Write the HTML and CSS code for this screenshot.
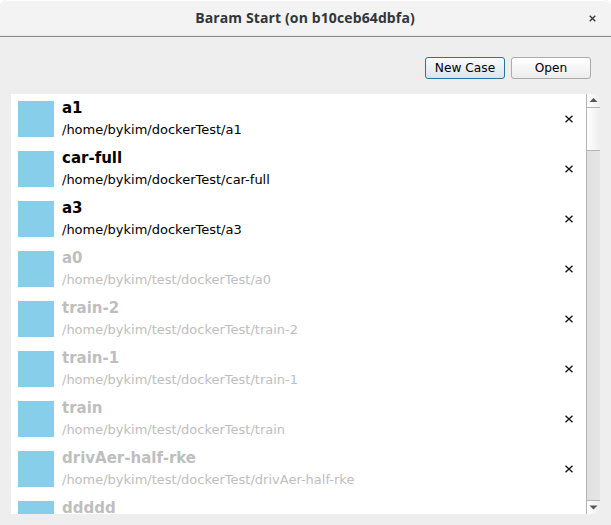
FILE: index.html
```html
<!DOCTYPE html>
<html lang="en"><head><meta charset="utf-8"><title>Baram Start</title><link rel="stylesheet" href="styles.css"></head>
<body>
<header class="titlebar"><h1>Baram Start (on b10ceb64dbfa)</h1><svg class="close" viewBox="0 0 7 7"><path d="M.7.7l5.6 5.6M6.3.7L.7 6.3"/></svg></header>
<div class="toolbar"><button class="btn primary">New Case</button><button class="btn">Open</button></div>
<main class="panel">
<ul class="list">
<li class="row"><span class="thumb"></span><div class="info"><b>a1</b><span>/home/bykim/dockerTest/a1</span></div><svg class="x" viewBox="0 0 8 8"><path d="M.5.8l7 6.4M7.5.8L.5 7.2"/></svg></li>
<li class="row"><span class="thumb"></span><div class="info"><b>car-full</b><span>/home/bykim/dockerTest/car-full</span></div><svg class="x" viewBox="0 0 8 8"><path d="M.5.8l7 6.4M7.5.8L.5 7.2"/></svg></li>
<li class="row"><span class="thumb"></span><div class="info"><b>a3</b><span>/home/bykim/dockerTest/a3</span></div><svg class="x" viewBox="0 0 8 8"><path d="M.5.8l7 6.4M7.5.8L.5 7.2"/></svg></li>
<li class="row off"><span class="thumb"></span><div class="info"><b>a0</b><span>/home/bykim/test/dockerTest/a0</span></div><svg class="x" viewBox="0 0 8 8"><path d="M.5.8l7 6.4M7.5.8L.5 7.2"/></svg></li>
<li class="row off"><span class="thumb"></span><div class="info"><b>train-2</b><span>/home/bykim/test/dockerTest/train-2</span></div><svg class="x" viewBox="0 0 8 8"><path d="M.5.8l7 6.4M7.5.8L.5 7.2"/></svg></li>
<li class="row off"><span class="thumb"></span><div class="info"><b>train-1</b><span>/home/bykim/test/dockerTest/train-1</span></div><svg class="x" viewBox="0 0 8 8"><path d="M.5.8l7 6.4M7.5.8L.5 7.2"/></svg></li>
<li class="row off"><span class="thumb"></span><div class="info"><b>train</b><span>/home/bykim/test/dockerTest/train</span></div><svg class="x" viewBox="0 0 8 8"><path d="M.5.8l7 6.4M7.5.8L.5 7.2"/></svg></li>
<li class="row off"><span class="thumb"></span><div class="info"><b>drivAer-half-rke</b><span>/home/bykim/test/dockerTest/drivAer-half-rke</span></div><svg class="x" viewBox="0 0 8 8"><path d="M.5.8l7 6.4M7.5.8L.5 7.2"/></svg></li>
<li class="row off"><span class="thumb"></span><div class="info"><b>ddddd</b></div></li>
</ul>
<div class="scroll"><svg class="arrow" viewBox="0 0 13 13"><path d="M2.500 8h8L6.500 4z"/></svg><div class="handle"></div><div class="track"></div><svg class="arrow down" viewBox="0 0 13 13"><path d="M2.500 4.500h8L6.500 8.500z"/></svg></div>
</main>
</body></html>
```
FILE: styles.css
```css
* { box-sizing: border-box; }
html { background: #fff; }
body { margin: 0; width: 611px; height: 525px; overflow: hidden; background: #eee; border-radius: 7px 7px 0 0; color: #000; font: 13px/15px "DejaVu Sans", sans-serif; }
.titlebar { height: 37px; display: grid; grid-template-columns: 1fr auto 1fr; align-items: center; background: linear-gradient(#f3f3f3 34px, #e6e6e6 36px); border-radius: 7px 7px 0 0; border-bottom: 1px solid #8b8d86; box-shadow: inset 0 1px #fff, 0 0 0 1px #bbb; clip-path: inset(0); }
.titlebar h1 { grid-column: 2; margin: 0; font: bold 14px/18px "Open Sans", sans-serif; letter-spacing: .12px; color: #31363b; transform: translateX(-.5px); }
.close { width: 7px; height: 7px; justify-self: end; margin-right: 15px; fill: none; stroke: #31363b; stroke-width: 1.3; }
.toolbar { height: 57px; display: flex; justify-content: flex-end; gap: 6px; padding: 20px 20px 0 0; }
.btn { width: 80px; height: 22px; padding: 1px 0 0; border: 1px solid #ababab; border-radius: 3px; background: linear-gradient(#fff, #ececec); font: 12.2px/15px "DejaVu Sans", sans-serif; color: #000; }
.primary { border-color: #2574a5; background: linear-gradient(#fbfcfd, #dbe4eb); }
.panel { height: 420px; margin: 0 11px; display: flex; background: #fff; overflow: hidden; }
.list { flex: 1; margin: 0; padding: 0; list-style: none; }
.row { height: 50px; display: flex; padding: 7px 13px 0 7px; }
.thumb { width: 36px; height: 36px; background: #87ceeb; }
.info { flex: 1; margin-left: 8px; }
.info b { display: block; font-size: 15px; line-height: 18px; margin-top: -2px; }
.info span { display: block; margin-top: 5px; }
.off .info { color: #bebebe; }
.x { width: 8px; height: 8px; margin-top: 14px; fill: none; stroke: #111; stroke-width: 1.3; }
.scroll { width: 14px; display: flex; flex-direction: column; border-left: 1px solid #b4b4b4; background: #e2e2e2; }
.arrow { height: 13px; background: linear-gradient(90deg, #fff, #eee); fill: #555; }
.handle { height: 44px; background: linear-gradient(90deg, #fff, #eee); border: solid #b4b4b4; border-width: 1px 0; }
.track { flex: 1; background: linear-gradient(90deg, #e0e0e0, #e6e6e6); }
.down { height: 14px; border-top: 1px solid #b4b4b4; }
```
